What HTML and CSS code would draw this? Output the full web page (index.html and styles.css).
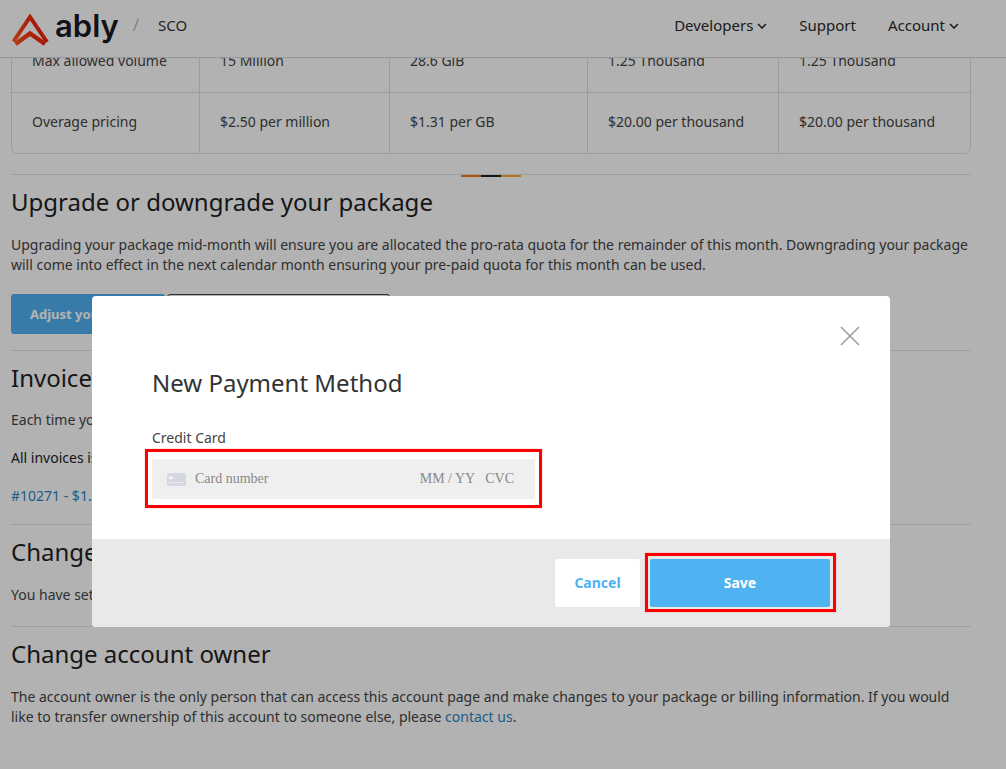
FILE: index.html
```html
<!DOCTYPE html>
<html lang="en">
<head>
<meta charset="utf-8">
<title>Ably account</title>
<link rel="stylesheet" href="styles.css">
</head>
<body>
<div class="page">
  <header class="topbar">
    <a class="brand">
      <svg class="logo" viewBox="11 6 39 33" width="39" height="33" aria-hidden="true">
        <defs>
          <linearGradient id="lg" gradientUnits="userSpaceOnUse" x1="12" y1="38" x2="49" y2="20">
            <stop offset="0" stop-color="#ff5f1c"/>
            <stop offset=".55" stop-color="#f53010"/>
            <stop offset="1" stop-color="#ee1606"/>
          </linearGradient>
        </defs>
        <path d="M13.500 34.500 L30 10 L47 35" fill="none" stroke="url(#lg)" stroke-width="4"/>
        <path d="M15.500 37 L30 26.500 L45 37" fill="none" stroke="url(#lg)" stroke-width="4.500"/>
      </svg>
      <span class="wordmark">ably</span>
    </a>
    <span class="slash">/</span>
    <span class="acct">SCO</span>
    <nav class="nav">
      <a class="nav-item">Developers <svg class="chev" viewBox="0 0 10 6" width="10" height="6"><path d="M1 1 L5 5 L9 1" fill="none" stroke="#222" stroke-width="1.500"/></svg></a>
      <a class="nav-item">Support</a>
      <a class="nav-item">Account <svg class="chev" viewBox="0 0 10 6" width="10" height="6"><path d="M1 1 L5 5 L9 1" fill="none" stroke="#222" stroke-width="1.500"/></svg></a>
    </nav>
  </header>

  <main class="content">
    <div class="table">
      <div class="cell">Max allowed volume</div>
      <div class="cell">15 Million</div>
      <div class="cell">28.6 GiB</div>
      <div class="cell">1.25 Thousand</div>
      <div class="cell last">1.25 Thousand</div>
      <div class="cell bottom">Overage pricing</div>
      <div class="cell bottom">$2.50 per million</div>
      <div class="cell bottom">$1.31 per GB</div>
      <div class="cell bottom">$20.00 per thousand</div>
      <div class="cell bottom last">$20.00 per thousand</div>
    </div>

    <section class="section first">
      <div class="tricolor"><i class="t1"></i><i class="t2"></i><i class="t3"></i></div>
      <h2>Upgrade or downgrade your package</h2>
      <p class="para">Upgrading your package mid-month will ensure you are allocated the pro-rata quota for the remainder of this month. Downgrading your package will come into effect in the next calendar month ensuring your pre-paid quota for this month can be used.</p>
      <div class="buttons">
        <a class="btn primary">Adjust your package</a>
        <a class="btn secondary">Cancel your package</a>
      </div>
    </section>

    <section class="section invoices">
      <h2>Invoices</h2>
      <p class="para">Each time you</p>
      <p class="para dark">All invoices is</p>
      <p class="para"><a class="link">#10271 - $1.25</a></p>
    </section>

    <section class="section change">
      <h2>Change</h2>
      <p class="para">You have set</p>
    </section>

    <section class="section owner">
      <h2>Change account owner</h2>
      <p class="para">The account owner is the only person that can access this account page and make changes to your package or billing information. If you would like to transfer ownership of this account to someone else, please <a class="link">contact us</a>.</p>
    </section>
  </main>

  <div class="scrim"></div>

  <div class="modal">
    <div class="modal-body">
      <svg class="close" viewBox="0 0 20 20" width="20" height="20" aria-hidden="true"><path d="M1 1 L19 19 M19 1 L1 19" stroke="#9a9a9a" stroke-width="1.500" fill="none"/></svg>
      <h3>New Payment Method</h3>
      <label class="label">Credit Card</label>
      <div class="field marked-field">
        <svg class="card" viewBox="0 0 19 13" width="19" height="13" aria-hidden="true">
          <rect width="19" height="13" rx="1.500" fill="#d5d8de"/>
          <rect x="2" y="3.500" width="4" height="2.500" fill="#f2f3f5"/>
          <path d="M2 9.500 H17" stroke="#f2f3f5" stroke-width="1" stroke-dasharray="2.500 1"/>
        </svg>
        <span class="ph number">Card number</span>
        <span class="ph">MM / YY</span>
        <span class="ph cvc">CVC</span>
      </div>
    </div>
    <div class="modal-foot">
      <a class="mbtn cancel">Cancel</a>
      <a class="mbtn save marked-save">Save</a>
    </div>
  </div>
</div>
</body>
</html>
```
FILE: styles.css
```css
*, *::before, *::after { box-sizing: border-box; }
html, body { margin: 0; padding: 0; }
body {
  font-family: "Noto Sans", "Open Sans", sans-serif;
  color: #444;
  background: #fff;
  font-size: 14px;
}
.page {
  position: relative;
  width: 1006px;
  height: 769px;
  overflow: hidden;
  background: #fff;
}
.topbar {
  position: relative;
  z-index: 2;
  height: 58px;
  display: flex;
  align-items: center;
  background: #fff;
  border-bottom: 1px solid #d8d8d8;
  padding: 0 47px 8px 11px;
}
.brand { display: flex; align-items: center; gap: 5px; }
.logo { display: block; margin-top: 9px; }
.wordmark {
  font-family: "Inter", sans-serif;
  font-size: 31px;
  font-weight: 600;
  color: #1a1a24;
  line-height: 1;
  margin-top: 2px;
}
.slash { color: #bbb; font-size: 17px; margin-left: 14px; }
.acct { font-size: 15px; color: #333; margin-left: 19px; }
.nav { margin-left: auto; display: flex; gap: 32px; }
.nav-item { font-size: 15px; color: #2a2a2a; display: flex; align-items: center; gap: 4px; }
.chev { margin-top: 2px; }

.content { padding: 0 35px 0 11px; }
.table {
  margin-top: -29px;
  display: grid;
  grid-template-columns: 188px 190px 198px 191px 1fr;
  grid-template-rows: 63px 60px;
  border: 1px solid #e0e0e0;
  border-radius: 0 0 6px 6px;
}
.cell {
  display: flex;
  align-items: center;
  padding-left: 20px;
  padding-bottom: 1px;
  border-right: 1px solid #e0e0e0;
  border-bottom: 1px solid #e0e0e0;
}
.cell.last { border-right: 0; }
.cell.bottom { border-bottom: 0; padding-bottom: 3px; }

.section { border-top: 1px solid #e3e3e3; position: relative; }
.section.first { margin-top: 20px; padding-top: 12px; height: 176px; }
.invoices { height: 174px; padding-top: 12px; }
.change { height: 102px; padding-top: 12px; }
.owner { padding-top: 12px; }
h2 {
  margin: 0;
  font-size: 24px;
  font-weight: 400;
  line-height: 29px;
  color: #222;
}
.para { margin: 19px 0 0; line-height: 20px; color: #444; }
.first .para { margin-top: 19px; }
.invoices .para { margin-top: 18px; }
.dark { color: #222; }
.link { color: #2a86c4; }
.tricolor {
  position: absolute;
  top: 0;
  left: 450px;
  display: flex;
  gap: 0;
}
.tricolor i { display: block; width: 20px; height: 2px; }
.t1 { background: #ef7d1a; }
.t2 { background: #222; }
.t3 { background: #fbab2c; }
.buttons { display: flex; gap: 2px; margin-top: 19px; }
.btn {
  height: 40px;
  border-radius: 3px;
  display: flex;
  align-items: center;
  font-size: 13px;
  font-weight: 700;
  padding-left: 19px;
}
.primary { width: 154px; background: #4fb2f1; color: #fff; }
.secondary { width: 223px; background: #fff; border: 1px solid #444; color: #444; }

.scrim {
  position: absolute;
  inset: 0;
  z-index: 3;
  background: rgba(0, 0, 0, .3);
}
.modal {
  position: absolute;
  z-index: 4;
  left: 92px;
  top: 296px;
  width: 798px;
  height: 331px;
  border-radius: 4px;
  overflow: hidden;
  background: #fff;
  display: flex;
  flex-direction: column;
}
.modal-body { position: relative; height: 243px; padding: 72px 0 0 60px; }
.close { position: absolute; right: 30px; top: 30px; }
h3 {
  margin: 0;
  font-size: 24px;
  font-weight: 400;
  line-height: 30px;
  color: #333;
}
.label { display: block; margin-top: 31px; font-size: 14px; line-height: 18px; color: #444; }
.field {
  position: relative;
  margin-top: 12px;
  width: 383px;
  height: 40px;
  background: #efefef;
  border-radius: 2px;
  display: flex;
  align-items: center;
  padding: 0 21px 0 15px;
  font-family: "Liberation Serif", serif;
}
.marked-field::after {
  content: "";
  position: absolute;
  left: -7px;
  top: -10px;
  width: 397px;
  height: 59px;
  border: 3px solid #f00;
  box-shadow: 0 0 1px rgba(255, 0, 0, .5);
}
.ph { font-size: 14px; color: #888; }
.number { margin-left: 9px; margin-right: auto; }
.cvc { margin-left: 10px; }
.modal-foot {
  flex: 1;
  background: #e9e9e9;
  display: flex;
  justify-content: flex-end;
  align-items: flex-start;
  gap: 10px;
  padding: 20px 60px 0 0;
}
.mbtn {
  height: 48px;
  border-radius: 2px;
  display: flex;
  align-items: center;
  justify-content: center;
  font-size: 14px;
  font-weight: 700;
  padding-bottom: 1px;
}
.cancel { width: 85px; background: #fff; color: #4fb2f1; }
.save { position: relative; width: 180px; background: #4fb2f1; color: #fff; }
.marked-save::after {
  content: "";
  position: absolute;
  left: -5px;
  top: -6px;
  width: 191px;
  height: 59px;
  border: 3px solid #f00;
  box-shadow: 0 0 1px rgba(255, 0, 0, .5);
}
```
